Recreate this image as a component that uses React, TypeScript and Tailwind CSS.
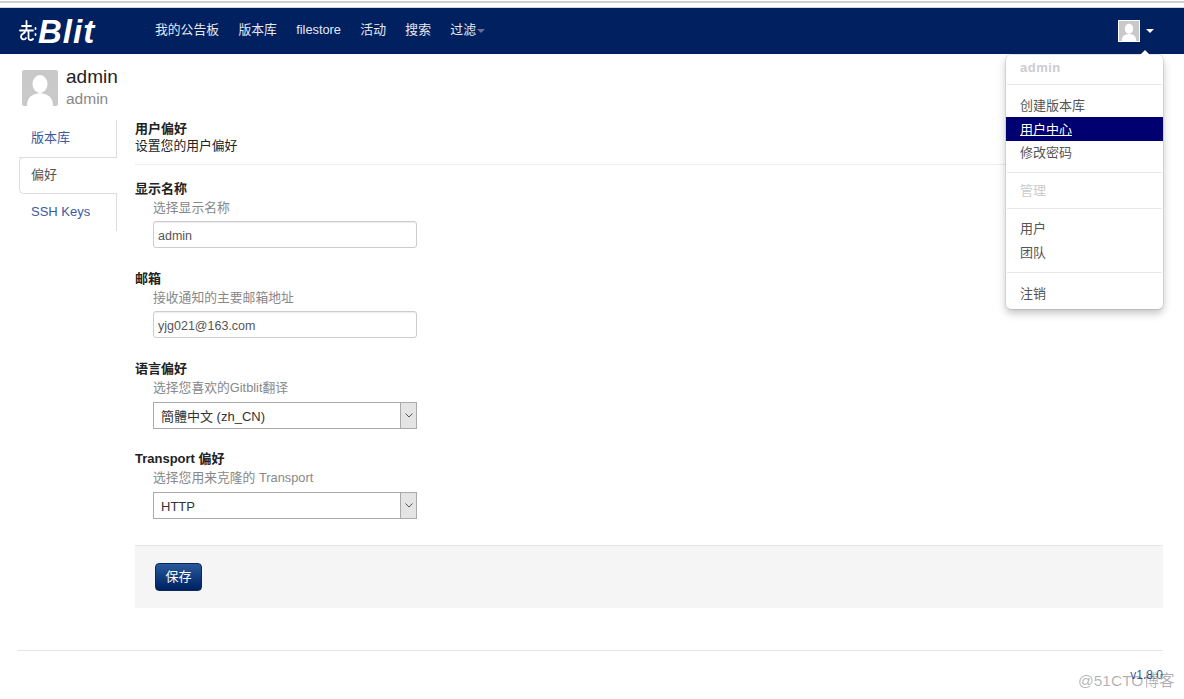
const font = "font-['Liberation_Sans','Noto_Sans_CJK_SC',sans-serif]";

function Avatar({ className }: { className: string }) {
  return (
    <svg viewBox="0 0 36 36" className={className}>
      <rect width="36" height="36" fill="#c9c9c9" />
      <ellipse cx="18" cy="14" rx="7.5" ry="9" fill="#fff" />
      <path d="M5 36c0-9 5-12 13-13 8 1 13 4 13 13z" fill="#fff" />
    </svg>
  );
}

function Logo() {
  return (
    <div className="flex items-center w-[155px] pl-[19px]">
      <svg viewBox="0 0 18 24" className="w-[18px] h-[24px] mr-px" fill="none" stroke="#fff" strokeWidth="1.8" strokeLinecap="round">
        <path d="M3 7h9M7.5 2v9M1 11.5h13M6 13c-1 2-4 1.500-4 4.500s4 4 5 1.500M9.500 13v6c0 2.500 3 2.500 4.500 1M16.500 9v1M16.500 15v1" />
      </svg>
      <span className="text-[33px] leading-none font-bold italic text-white tracking-[1px]">Blit</span>
    </div>
  );
}

function Navbar() {
  return (
    <div className="relative flex items-center h-[46px] bg-[#002060]">
      <Logo />
      <nav className="flex items-center gap-[19.4px] text-[12.8px] text-[#e6e9f0] -mt-[2px]">
        <span>我的公告板</span>
        <span>版本库</span>
        <span>filestore</span>
        <span>活动</span>
        <span>搜索</span>
        <span className="flex items-center gap-[1px]">
          过滤
          <span className="mt-[1px] border-x-[4px] border-t-[4px] border-x-transparent border-t-[#5f739c]" />
        </span>
      </nav>
      <div className="ml-auto mr-[30px] flex items-center gap-[6px]">
        <Avatar className="w-[22px] h-[22px] border border-white" />
        <span className="border-x-[4px] border-t-[4px] border-x-transparent border-t-white" />
      </div>
    </div>
  );
}

function Menu() {
  const divider = "h-px bg-[#e8e8e8] mx-[1px]";
  const item = "px-[14px] h-[24px] leading-[24px] text-[#555]";
  return (
    <div className="absolute left-[1006px] top-[55px] w-[157px] h-[254px] bg-white rounded-[5px] shadow-[0_0_0_1px_rgba(0,0,0,0.08),0_4px_8px_rgba(0,0,0,0.25)] text-[13px]">
      <span className="absolute -top-[5px] left-[134px] border-x-[5px] border-b-[5px] border-x-transparent border-b-white" />
      <div className="px-[14px] pt-[4px] h-[29px] leading-[18px] font-bold text-[#ccc] tracking-[0.5px]">admin</div>
      <div className={divider} />
      <div className="h-[9px]" />
      <div className={item}>创建版本库</div>
      <div className="px-[14px] h-[24px] leading-[26px] bg-[#000070] text-white underline -mt-[1px]">用户中心</div>
      <div className={item}>修改密码</div>
      <div className="h-[7px]" />
      <div className={divider} />
      <div className="px-[14px] h-[35px] leading-[35px] text-[#ccc]">管理</div>
      <div className={divider} />
      <div className="h-[8px]" />
      <div className={item}>用户</div>
      <div className={item}>团队</div>
      <div className="h-[7px]" />
      <div className={divider} />
      <div className="h-[9px]" />
      <div className={item}>注销</div>
    </div>
  );
}

function Sidebar() {
  return (
    <div className="w-[98px] ml-[19px] text-[13px] text-[#3b5b9d]">
      <div className="h-[38px] leading-[36px] pl-[12px] border-r border-b border-[#ddd]">版本库</div>
      <div className="h-[37px] leading-[34px] pl-[11px] text-[#555] border border-r-0 border-[#ddd] rounded-l-[5px] -mt-px bg-white">偏好</div>
      <div className="h-[37px] leading-[36px] pl-[12px] border-r border-[#ddd]">SSH Keys</div>
    </div>
  );
}

function Field({ label, help, top, children }: { label: string; help: string; top: string; children: React.ReactNode }) {
  return (
    <div className={top}>
      <div className="text-[13px] leading-[18px] font-bold text-[#222]">{label}</div>
      <div className="ml-[18px] mt-px text-[12.8px] leading-[18px] text-[#888]">{help}</div>
      <div className="ml-[18px] pt-[4px]">{children}</div>
    </div>
  );
}

function TextBox({ value }: { value: string }) {
  return (
    <input
      defaultValue={value}
      className="block w-[264px] h-[27px] px-[4px] pt-[2px] border border-[#ccc] rounded-[3px] shadow-[inset_0_1px_1px_rgba(0,0,0,0.075)] text-[12.5px] text-[#555] bg-white outline-none"
    />
  );
}

function SelectBox({ value }: { value: string }) {
  return (
    <div className="flex items-stretch w-[264px] h-[27px] mt-px border border-[#aaa] bg-white">
      <span className="flex-1 pl-[7px] leading-[27px] text-[13px] text-[#333]">{value}</span>
      <span className="flex items-center justify-center w-[16px] bg-[#e4e4e4] border-l border-[#aaa]">
        <svg viewBox="0 0 8 5" className="w-[8px] h-[5px]" fill="none" stroke="#555" strokeWidth="1">
          <path d="M0.5 0.5L4 4l3.5-3.5" />
        </svg>
      </span>
    </div>
  );
}

export default function App() {
  return (
    <div className={`relative h-[699px] overflow-hidden bg-white ${font}`}>
      <div className="h-[8px] pt-px border-b border-[#d5d5d5]">
        <div className="h-[2px] bg-[#d0d0d0]" />
      </div>
      <Navbar />
      <Menu />

      <div className="flex items-center gap-[8px] ml-[22px] mt-[16px] h-[36px]">
        <Avatar className="w-[36px] h-[36px] rounded-[2px]" />
        <div>
          <div className="text-[19px] leading-[22px] text-[#222] -mt-px">admin</div>
          <div className="text-[15.5px] leading-[20px] text-[#888] mt-px">admin</div>
        </div>
      </div>

      <div className="flex mt-[14px]">
        <Sidebar />
        <div className="ml-[18px] w-[1028px]">
          <div className="text-[12.8px] leading-[17px] text-[#222] h-[45px] pt-0 border-b border-[#eee]">
            <div className="font-bold text-[13px]">用户偏好</div>
            <div>设置您的用户偏好</div>
          </div>
          <Field top="mt-[15px]" label="显示名称" help="选择显示名称">
            <TextBox value="admin" />
          </Field>
          <Field top="mt-[22px]" label="邮箱" help="接收通知的主要邮箱地址">
            <TextBox value="yjg021@163.com" />
          </Field>
          <Field top="mt-[22px]" label="语言偏好" help="选择您喜欢的Gitblit翻译">
            <SelectBox value="簡體中文 (zh_CN)" />
          </Field>
          <Field top="mt-[21px]" label="Transport 偏好" help="选择您用来克隆的 Transport">
            <SelectBox value="HTTP" />
          </Field>
          <div className="mt-[26px] h-[63px] pt-[17px] pl-[20px] bg-[#f5f5f5] border-t border-[#e5e5e5]">
            <button className="block w-[47px] h-[28px] rounded-[4px] border border-[#0b2a5c] bg-gradient-to-b from-[#2a5a9c] to-[#002060] text-[13px] text-white">
              保存
            </button>
          </div>
        </div>
      </div>

      <div className="ml-[17px] w-[1146px] mt-[42px] border-t border-[#e5e5e5] pt-[16px] text-right text-[12px] leading-[16px] text-[#3b5b9d]">
        v1.8.0
      </div>
      <div className="absolute left-[1078px] top-[671px] text-[15.5px] leading-[20px] text-[#00000050]">@51CTO博客</div>
    </div>
  );
}
